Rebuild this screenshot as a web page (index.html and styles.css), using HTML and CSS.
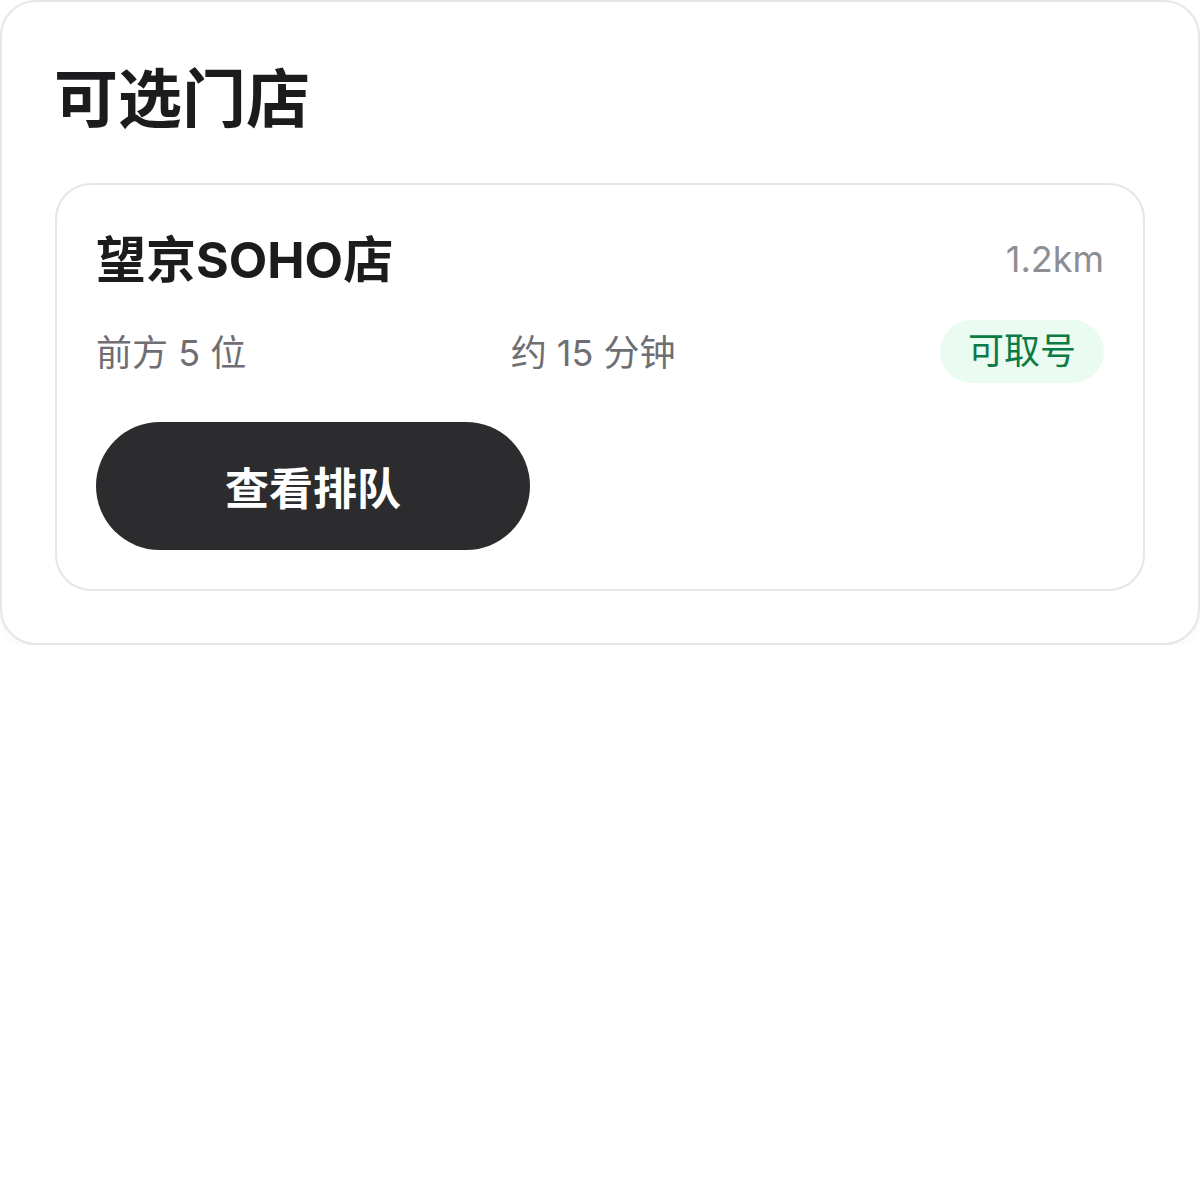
FILE: index.html
```html
<!DOCTYPE html>
<html lang="zh">
<head>
<meta charset="utf-8">
<link rel="stylesheet" href="styles.css">
</head>
<body>
<section class="panel">
  <h1 class="panel-title">可选门店</h1>
  <div class="store-card">
    <div class="store-head">
      <span class="store-name">望京SOHO店</span>
      <span class="store-dist">1.2km</span>
    </div>
    <div class="store-meta">
      <span class="meta-text">前方 5 位</span>
      <span class="meta-text">约 15 分钟</span>
      <span class="badge">可取号</span>
    </div>
    <button class="queue-btn">查看排队</button>
  </div>
</section>
</body>
</html>
```
FILE: styles.css
```css
* { box-sizing: border-box; }
html, body { margin: 0; padding: 0; background: #ffffff; }
body {
  font-family: Inter, "Noto Sans CJK SC", "Noto Sans", sans-serif;
  color: #1c1c1e;
}
.panel {
  width: 1200px;
  border: 2px solid #e5e5ea;
  border-radius: 36px;
  padding: 58px 53px 52px;
  box-shadow: 0 2px 6px rgba(0, 0, 0, 0.04);
  background: #fff;
}
.panel-title {
  margin: 0 0 46px -1px;
  font-size: 64px;
  line-height: 77px;
  font-weight: 700;
  color: #1c1c1e;
}
.store-card {
  border: 2px solid #e5e5ea;
  border-radius: 36px;
  padding: 40px 39px 39px;
  display: flex;
  flex-direction: column;
}
.store-head {
  display: flex;
  justify-content: space-between;
  align-items: center;
  height: 62px;
}
.store-name {
  font-size: 50px;
  font-weight: 700;
  color: #1c1c1e;
}
.store-dist {
  font-size: 36px;
  color: #8e8e93;
  margin-top: 6px;
}
.store-meta {
  display: flex;
  justify-content: space-between;
  align-items: center;
  margin-top: 33px;
}
.meta-text {
  font-size: 36px;
  color: #6e6e73;
  margin-top: -3px;
}
.badge {
  font-size: 36px;
  line-height: 63px;
  height: 63px;
  padding: 0 28px;
  border-radius: 32px;
  background: #eafbf1;
  color: #0b7a44;
}
.queue-btn {
  margin-top: 39px;
  width: 434px;
  height: 128px;
  border: none;
  border-radius: 64px;
  background: #2c2c2e;
  color: #ffffff;
  font-family: inherit;
  font-size: 44px;
  font-weight: 700;
  padding: 0;
}
```
